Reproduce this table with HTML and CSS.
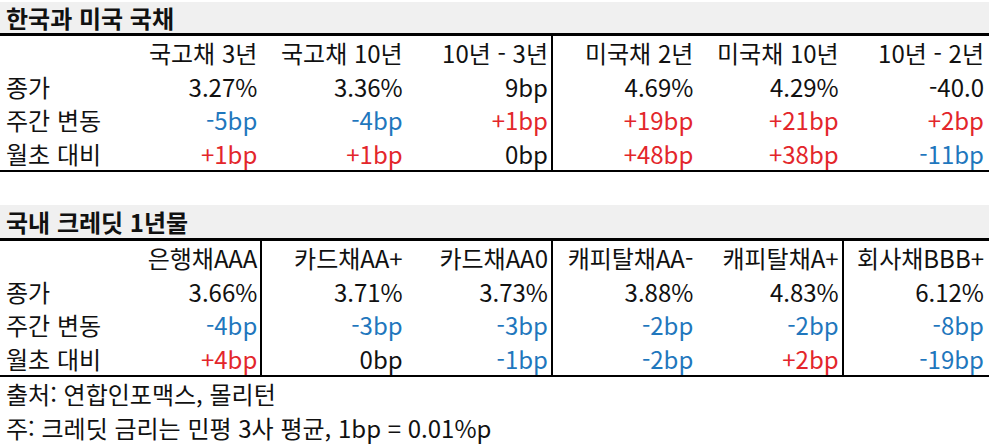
FILE: index.html
```html
<!DOCTYPE html>
<html lang="ko">
<head>
<meta charset="utf-8">
<title>한국과 미국 국채 / 국내 크레딧 1년물</title>
<link rel="stylesheet" href="styles.css">
</head>
<body>
<div class="sheet">
  <section class="block block-first">
    <div class="title">한국과 미국 국채</div>
    <div class="grid">
      <div class="cell label"></div>
      <div class="cell">국고채 3년</div>
      <div class="cell">국고채 10년</div>
      <div class="cell sep">10년 - 3년</div>
      <div class="cell">미국채 2년</div>
      <div class="cell">미국채 10년</div>
      <div class="cell">10년 - 2년</div>

      <div class="cell label">종가</div>
      <div class="cell">3.27%</div>
      <div class="cell">3.36%</div>
      <div class="cell sep">9bp</div>
      <div class="cell">4.69%</div>
      <div class="cell">4.29%</div>
      <div class="cell">-40.0</div>

      <div class="cell label">주간 변동</div>
      <div class="cell down">-5bp</div>
      <div class="cell down">-4bp</div>
      <div class="cell sep up">+1bp</div>
      <div class="cell up">+19bp</div>
      <div class="cell up">+21bp</div>
      <div class="cell up">+2bp</div>

      <div class="cell label">월초 대비</div>
      <div class="cell up">+1bp</div>
      <div class="cell up">+1bp</div>
      <div class="cell sep">0bp</div>
      <div class="cell up">+48bp</div>
      <div class="cell up">+38bp</div>
      <div class="cell down">-11bp</div>
    </div>
  </section>

  <section class="block block-second">
    <div class="title title-tall">국내 크레딧 1년물</div>
    <div class="grid">
      <div class="cell label"></div>
      <div class="cell sep">은행채AAA</div>
      <div class="cell">카드채AA+</div>
      <div class="cell sep">카드채AA0</div>
      <div class="cell">캐피탈채AA-</div>
      <div class="cell sep">캐피탈채A+</div>
      <div class="cell">회사채BBB+</div>

      <div class="cell label">종가</div>
      <div class="cell sep">3.66%</div>
      <div class="cell">3.71%</div>
      <div class="cell sep">3.73%</div>
      <div class="cell">3.88%</div>
      <div class="cell sep">4.83%</div>
      <div class="cell">6.12%</div>

      <div class="cell label">주간 변동</div>
      <div class="cell sep down">-4bp</div>
      <div class="cell down">-3bp</div>
      <div class="cell sep down">-3bp</div>
      <div class="cell down">-2bp</div>
      <div class="cell sep down">-2bp</div>
      <div class="cell down">-8bp</div>

      <div class="cell label">월초 대비</div>
      <div class="cell sep up">+4bp</div>
      <div class="cell">0bp</div>
      <div class="cell sep down">-1bp</div>
      <div class="cell down">-2bp</div>
      <div class="cell sep up">+2bp</div>
      <div class="cell down">-19bp</div>
    </div>
    <div class="notes">
      <p class="note">출처: 연합인포맥스, 몰리턴</p>
      <p class="note">주: 크레딧 금리는 민평 3사 평균, 1bp = 0.01%p</p>
    </div>
  </section>
</div>
</body>
</html>
```

FILE: styles.css
```css
html, body {
  margin: 0;
  padding: 0;
  background: #ffffff;
}

body {
  font-family: "Noto Sans CJK KR", "Noto Sans", sans-serif;
  font-size: 24px;
  color: #111111;
}

.sheet {
  width: 989px;
  padding-top: 2px;
}

.block-second {
  margin-top: 33px;
}

.title {
  height: 31px;
  line-height: 31px;
  background: #f0f0f0;
  border-bottom: 3px solid #000000;
  padding-left: 6px;
  font-weight: 700;
  font-size: 24px;
}

.title-tall {
  height: 33px;
  line-height: 33px;
}

.grid {
  display: grid;
  grid-template-columns: 117px repeat(6, 1fr);
  grid-auto-rows: 33.5px;
  border-bottom: 2px solid #000000;
}

.cell {
  box-sizing: border-box;
  line-height: 33.5px;
  text-align: right;
  padding-right: 5px;
  white-space: nowrap;
}

.cell.label {
  text-align: left;
  padding-left: 6px;
  padding-right: 0;
}

.cell.sep {
  border-right: 2px solid #000000;
  padding-right: 3px;
}

.up {
  color: #e3262b;
}

.down {
  color: #1f77bd;
}

.notes {
  padding-left: 6px;
}

.note {
  margin: 0;
  height: 34px;
  line-height: 34px;
  white-space: nowrap;
}
```
